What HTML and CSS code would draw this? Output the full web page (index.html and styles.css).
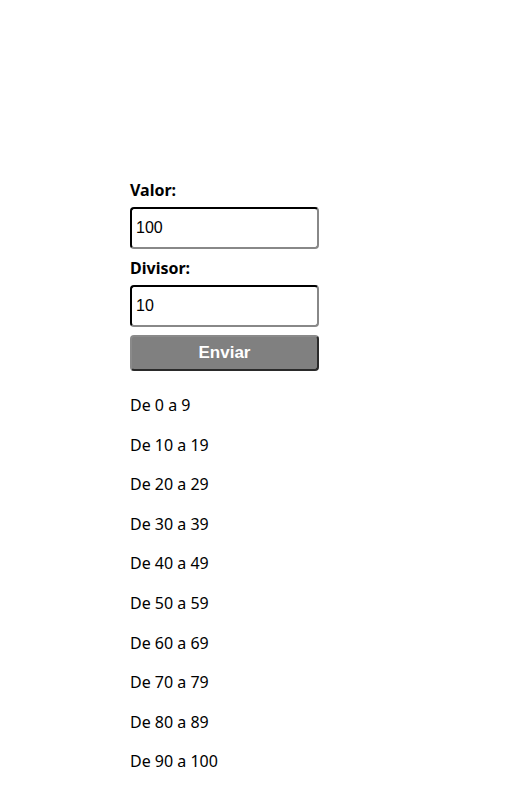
FILE: index.html
```html
<!DOCTYPE html>
<html lang="pt">
<head>
<meta charset="utf-8">
<title>Divisor</title>
<link rel="stylesheet" href="styles.css">
</head>
<body>
<main class="page">
  <form class="form">
    <label class="label" for="valor">Valor:</label>
    <input class="field" id="valor" type="text" value="100">
    <label class="label" for="divisor">Divisor:</label>
    <input class="field" id="divisor" type="text" value="10">
    <button class="submit" type="button">Enviar</button>
  </form>
  <div class="results">
    <p class="range">De 0 a 9</p>
    <p class="range">De 10 a 19</p>
    <p class="range">De 20 a 29</p>
    <p class="range">De 30 a 39</p>
    <p class="range">De 40 a 49</p>
    <p class="range">De 50 a 59</p>
    <p class="range">De 60 a 69</p>
    <p class="range">De 70 a 79</p>
    <p class="range">De 80 a 89</p>
    <p class="range">De 90 a 100</p>
  </div>
</main>
</body>
</html>
```
FILE: styles.css
```css
html, body {
  margin: 0;
  background: #ffffff;
}
body {
  font-family: "Noto Sans", "Open Sans", sans-serif;
  font-size: 16px;
  color: #000;
}
.page {
  padding: 178px 0 0 130px;
  width: 189px;
}
.form {
  display: flex;
  flex-direction: column;
}
.label {
  font-weight: bold;
  font-size: 16px;
  line-height: 22px;
  padding-top: 1px;
  margin-bottom: 6px;
}
.field {
  box-sizing: border-box;
  width: 189px;
  height: 42px;
  margin: 0 0 7px;
  padding: 0 4px;
  border: 2px inset #767676;
  border-top-color: #1b1b1b;
  border-left-color: #1b1b1b;
  border-right-color: #888;
  border-bottom-color: #888;
  border-radius: 4px;
  font-family: "Liberation Sans", Arial, sans-serif;
  font-size: 16px;
  color: #000;
  background: #fff;
}
.submit {
  box-sizing: border-box;
  width: 189px;
  height: 36px;
  margin-top: 1px;
  border: 2px solid #2a2a2a;
  border-top-color: #8a8a8a;
  border-left-color: #8a8a8a;
  border-radius: 4px;
  background: #808080;
  color: #fff;
  font-family: "Liberation Sans", Arial, sans-serif;
  font-weight: bold;
  font-size: 17px;
  padding: 0;
}
.results {
  margin-top: 23px;
}
.range {
  margin: 0 0 16px;
  line-height: 23.6px;
}
```
